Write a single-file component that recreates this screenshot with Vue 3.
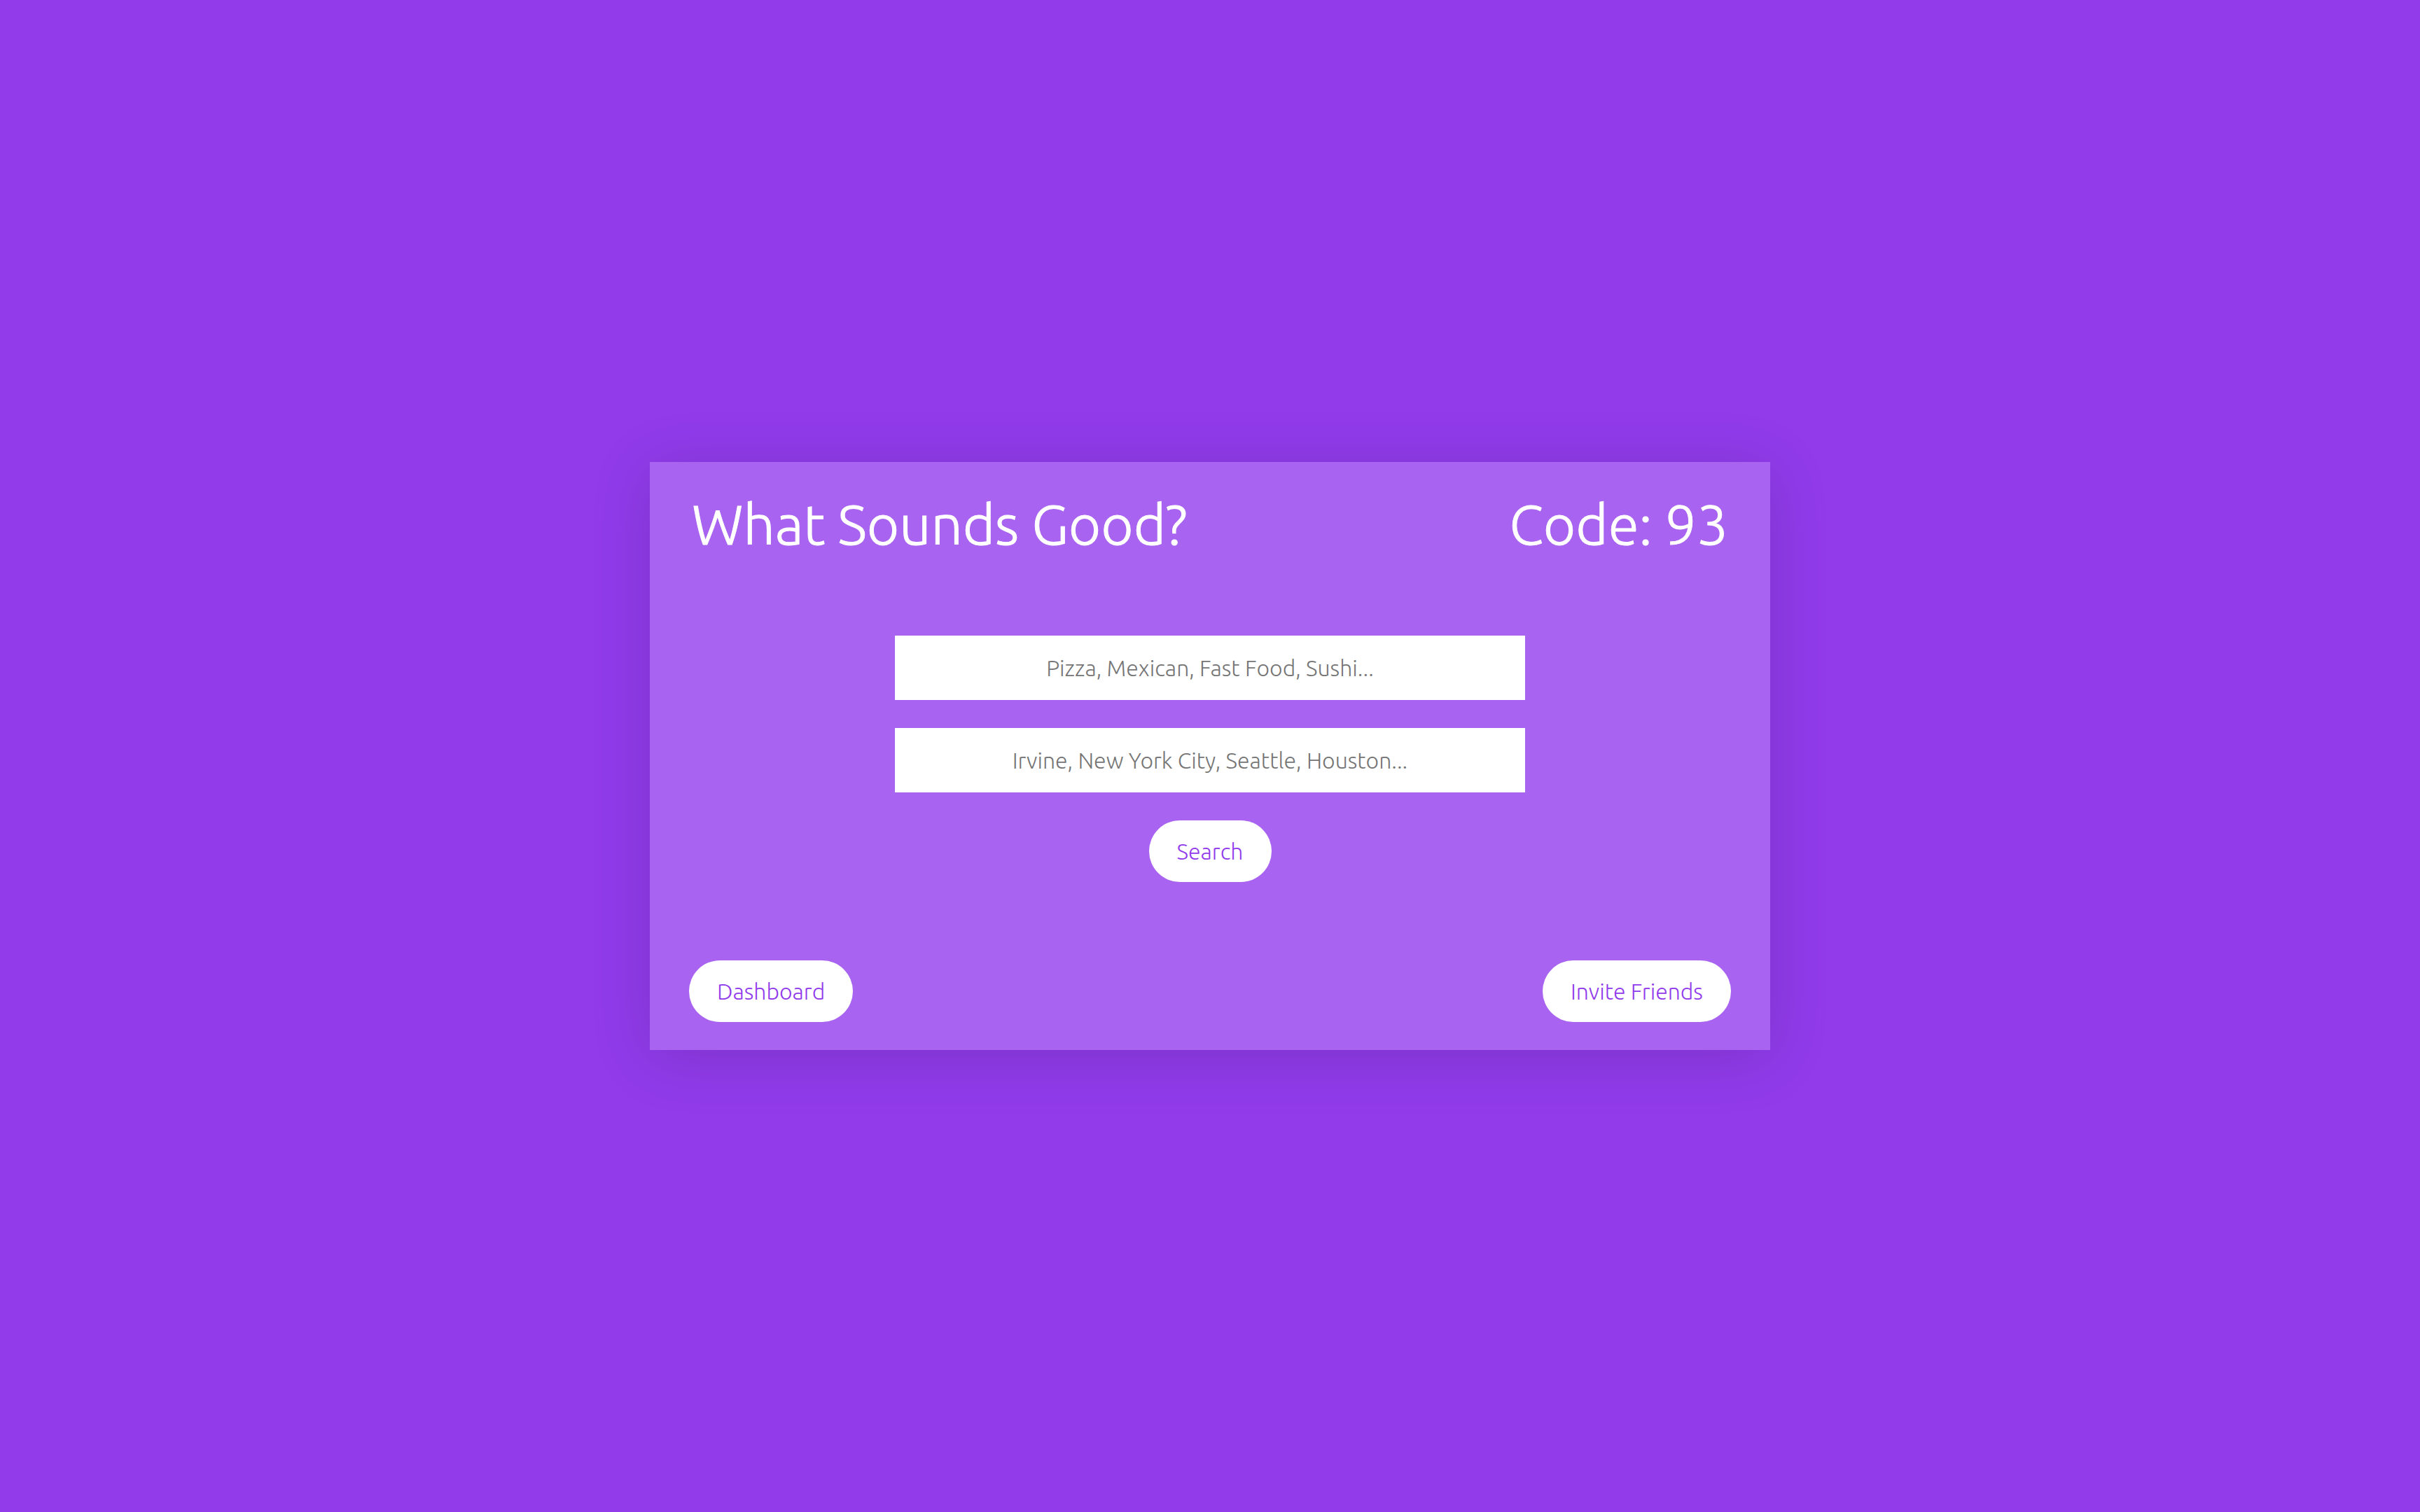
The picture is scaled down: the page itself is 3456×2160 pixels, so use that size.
<script setup>
import { ref } from 'vue'

const code = ref(93)
const food = ref('')
const city = ref('')
</script>

<template>
  <main class="page">
    <section class="card">
      <header class="header">
        <h1 class="title">What Sounds Good?</h1>
        <p class="title">Code: {{ code }}</p>
      </header>
      <form class="search" @submit.prevent>
        <input v-model="food" class="field" type="text" aria-label="Food" placeholder="Pizza, Mexican, Fast Food, Sushi..." />
        <input v-model="city" class="field" type="text" aria-label="City" placeholder="Irvine, New York City, Seattle, Houston..." />
        <button class="button" type="submit">Search</button>
      </form>
      <footer class="footer">
        <button class="button" type="button">Dashboard</button>
        <button class="button" type="button">Invite Friends</button>
      </footer>
    </section>
  </main>
</template>

<style>
body {
  margin: 0;
  background: #913beb;
}
</style>

<style scoped>
.page {
  display: flex;
  align-items: center;
  justify-content: center;
  min-height: 100vh;
  font-family: Ubuntu, "Noto Sans", sans-serif;
  font-weight: 300;
}

.card {
  box-sizing: border-box;
  width: 100%;
  max-width: 1600px;
  padding: 40px 56px;
  background: #a864f0;
  box-shadow: 0 10px 80px rgba(0, 0, 0, 0.15);
}

.header {
  display: flex;
  justify-content: space-between;
  padding: 0 4px;
}

.title {
  margin: 0;
  color: #fff;
  font-size: 80px;
  font-weight: inherit;
  line-height: 96px;
  -webkit-text-stroke: 1px currentColor;
}

.search {
  display: flex;
  flex-direction: column;
  align-items: center;
  gap: 40px;
  margin: 112px 0;
}

.field {
  box-sizing: border-box;
  width: 100%;
  max-width: 900px;
  height: 92px;
  padding: 0 20px;
  border: 0;
  background: #fff;
  color: #757575;
  font: inherit;
  font-size: 32px;
  text-align: center;
}

.field::placeholder {
  color: #757575;
}

.button {
  height: 88px;
  padding: 0 40px;
  border: 0;
  border-radius: 44px;
  background: #fff;
  color: #903aeb;
  font: inherit;
  font-size: 32px;
}

.footer {
  display: flex;
  justify-content: space-between;
}
</style>
